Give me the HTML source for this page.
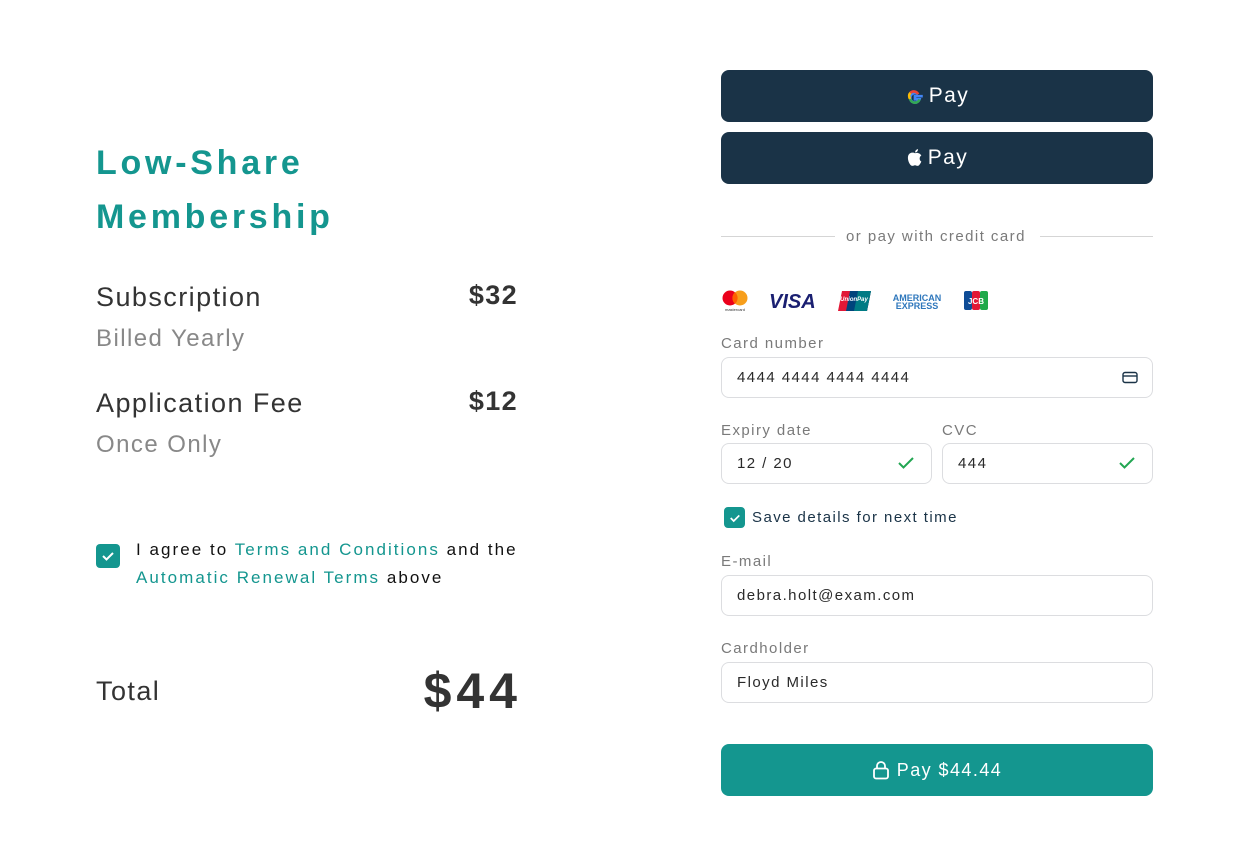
<!DOCTYPE html>
<html><head><meta charset="utf-8"><style>
*{box-sizing:border-box;margin:0;padding:0}
body{width:1244px;height:864px;background:#fff;font-family:"Liberation Sans",sans-serif;position:relative;overflow:hidden;color:#333;letter-spacing:0.09em}
.a{position:absolute;white-space:nowrap}
.teal{color:#14968f}
.lbl{font-size:15px;color:#7a7a7a}
.inp{position:absolute;border:1px solid #dcdde0;border-radius:8px;height:41px;font-size:15px;color:#2a2a2a;padding-left:15px;line-height:39px}
.btn{position:absolute;left:721px;width:432px;height:52px;border-radius:8px;background:#1a3347;color:#fff;font-size:21px;display:flex;align-items:center;justify-content:center;gap:4px}
.chk{position:absolute;background:#14968f;border-radius:4px;display:flex;align-items:center;justify-content:center}
</style></head><body>
<div class="a teal" style="left:96px;top:136px;font-size:34px;font-weight:bold;line-height:54px;letter-spacing:0.11em">Low-Share<br>Membership</div>
<div class="a" style="left:96px;top:282px;font-size:27px;color:#333">Subscription</div>
<div class="a" style="left:96px;top:325px;font-size:24px;color:#888">Billed Yearly</div>
<div class="a" style="right:726px;top:280px;font-size:27px;font-weight:bold;color:#333;letter-spacing:0.05em">$32</div>
<div class="a" style="left:96px;top:388px;font-size:27px;color:#333">Application Fee</div>
<div class="a" style="left:96px;top:431px;font-size:24px;color:#888">Once Only</div>
<div class="a" style="right:726px;top:386px;font-size:27px;font-weight:bold;color:#333;letter-spacing:0.05em">$12</div>
<div class="chk" style="left:96px;top:544px;width:24px;height:24px"><svg width="14" height="14" viewBox="0 0 14 14"><path d="M2 7l3.5 3.5L12 4" stroke="#fff" stroke-width="2" fill="none"/></svg></div>
<div class="a" style="left:136px;top:536px;font-size:17px;line-height:28px;color:#111;letter-spacing:0.12em">I agree to <span class="teal">Terms and Conditions</span> and the<br><span class="teal">Automatic Renewal Terms</span> above</div>
<div class="a" style="left:96px;top:676px;font-size:27px;color:#333">Total</div>
<div class="a" style="right:722px;top:662px;font-size:50px;font-weight:bold;color:#333;letter-spacing:0.1em">$44</div>

<div class="btn" style="top:70px"><svg width="20" height="20" viewBox="0 0 18 18"><path d="M16 9.2H9v2.8h4a4.3 4.3 0 1 1-1.2-4.6" stroke="#4285f4" stroke-width="2.4" fill="none"/><path d="M4.8 6.2A4.3 4.3 0 0 1 11.8 7.4" stroke="#ea4335" stroke-width="2.4" fill="none"/><path d="M4.7 11.7A4.3 4.3 0 0 1 4.8 6.2" stroke="#fbbc05" stroke-width="2.4" fill="none"/><path d="M13 12A4.3 4.3 0 0 1 4.7 11.7" stroke="#34a853" stroke-width="2.4" fill="none"/></svg><span>Pay</span></div>
<div class="btn" style="top:132px"><svg width="18" height="20" viewBox="0 0 17 19"><path d="M8.5 5C7 4 3 4 2 7.5 1 11 3.5 17 6 17c1.2 0 1.500-.6 2.5-.6s1.3.6 2.5.6c1.5 0 3-2.8 3.5-4.2-2-1-2.2-4.5 0-5.6C13.5 5.3 11 4 8.5 5z" fill="#fff"/><path d="M8.6 4.3C8.5 2.6 10 1.2 11.4 1.1c.1 1.6-1.3 3.2-2.8 3.2z" fill="#fff"/></svg><span>Pay</span></div>

<div class="a" style="left:721px;top:236px;width:114px;height:1px;background:#d5d5d5"></div>
<div class="a" style="left:1040px;top:236px;width:113px;height:1px;background:#d5d5d5"></div>
<div class="a" style="left:846px;top:228px;font-size:15px;color:#7a7a7a">or pay with credit card</div>

<svg class="a" style="left:721px;top:288px;letter-spacing:0" width="270" height="26" viewBox="0 0 270 26">
<circle cx="9" cy="10" r="7.5" fill="#eb001b"/><circle cx="19" cy="10" r="7.5" fill="#f79e1b"/><path d="M14 4.3a7.5 7.5 0 0 1 0 11.4a7.5 7.5 0 0 1 0-11.4z" fill="#ff5f00"/>
<text x="14" y="23" font-size="4" text-anchor="middle" fill="#333" font-family="Liberation Sans">mastercard</text>
<text x="48" y="20" font-size="20" font-weight="bold" font-style="italic" fill="#1a1f71" font-family="Liberation Sans">VISA</text>
<path d="M121 3h29l-4 20h-29z" fill="#e21836"/><path d="M129 3h21l-4 20h-21z" fill="#00447c"/><path d="M137 3h13l-4 20h-13z" fill="#007b84"/>
<text x="133" y="13" font-size="6" font-style="italic" font-weight="bold" fill="#fff" text-anchor="middle" font-family="Liberation Sans">UnionPay</text>
<text x="196" y="13" font-size="9" font-weight="bold" fill="#2e77bc" text-anchor="middle" font-family="Liberation Sans">AMERICAN</text>
<text x="196" y="21" font-size="9" font-weight="bold" fill="#2e77bc" text-anchor="middle" font-family="Liberation Sans">EXPRESS</text>
<rect x="243" y="3" width="8" height="19" rx="2" fill="#0e4c96"/><rect x="251" y="3" width="8" height="19" rx="2" fill="#e21836"/><rect x="259" y="3" width="8" height="19" rx="2" fill="#20a94a"/>
<text x="255" y="16" font-size="8" font-weight="bold" fill="#fff" text-anchor="middle" font-family="Liberation Sans">JCB</text>
</svg>

<div class="a lbl" style="left:721px;top:335px">Card number</div>
<div class="inp" style="left:721px;top:357px;width:432px">4444 4444 4444 4444<svg style="position:absolute;right:14px;top:13px" width="16" height="13" viewBox="0 0 16 13"><rect x="1" y="1.5" width="14" height="10" rx="2" stroke="#1a3347" stroke-width="1.4" fill="none"/><path d="M1 5h14" stroke="#1a3347" stroke-width="1.4"/></svg></div>
<div class="a lbl" style="left:721px;top:422px">Expiry date</div>
<div class="a lbl" style="left:942px;top:422px">CVC</div>
<div class="inp" style="left:721px;top:443px;width:211px">12 / 20<svg style="position:absolute;right:16px;top:12px" width="18" height="14" viewBox="0 0 18 14"><path d="M2 7l4.5 4.5L16 2" stroke="#22a652" stroke-width="2" fill="none"/></svg></div>
<div class="inp" style="left:942px;top:443px;width:211px">444<svg style="position:absolute;right:16px;top:12px" width="18" height="14" viewBox="0 0 18 14"><path d="M2 7l4.5 4.5L16 2" stroke="#22a652" stroke-width="2" fill="none"/></svg></div>
<div class="chk" style="left:724px;top:507px;width:21px;height:21px"><svg width="12" height="12" viewBox="0 0 14 14"><path d="M2 7l3.5 3.5L12 4" stroke="#fff" stroke-width="2" fill="none"/></svg></div>
<div class="a" style="left:752px;top:509px;font-size:15px;color:#1a3347">Save details for next time</div>
<div class="a lbl" style="left:721px;top:553px">E-mail</div>
<div class="inp" style="left:721px;top:575px;width:432px">debra.holt@exam.com</div>
<div class="a lbl" style="left:721px;top:640px">Cardholder</div>
<div class="inp" style="left:721px;top:662px;width:432px">Floyd Miles</div>
<div class="btn" style="top:744px;background:#14968f;font-size:18px;gap:7px"><svg width="18" height="20" viewBox="0 0 18 20"><rect x="2" y="8.5" width="14" height="10" rx="2" stroke="#fff" stroke-width="1.8" fill="none"/><path d="M5 8.5V6a4 4 0 0 1 8 0v2.5" stroke="#fff" stroke-width="1.8" fill="none"/></svg><span>Pay $44.44</span></div>
</body></html>
